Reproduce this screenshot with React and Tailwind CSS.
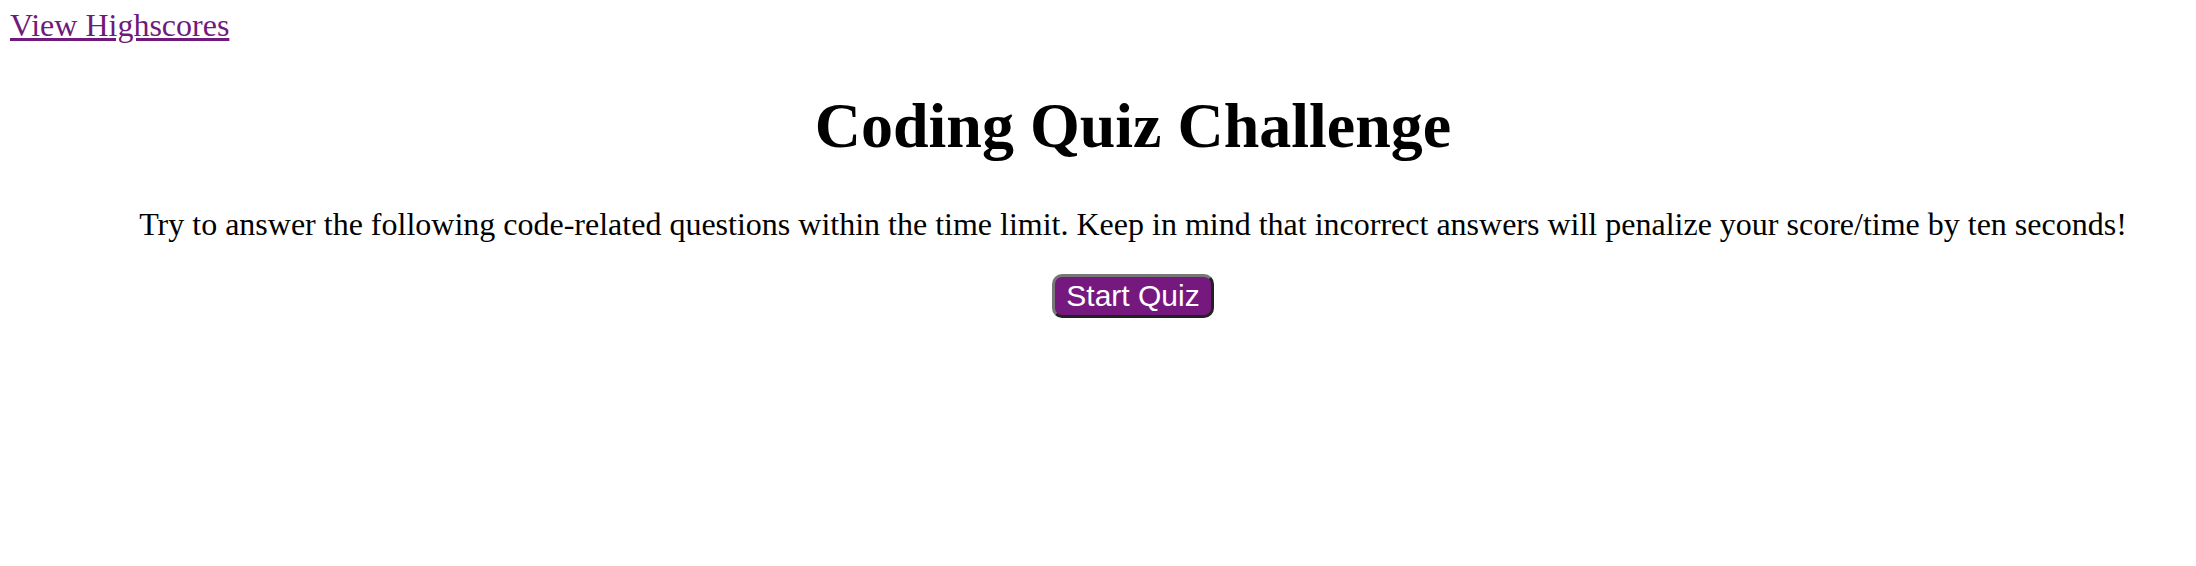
export default function App() {
    return (
        <div className="min-h-[566px] bg-white text-black">
            <header className="pt-[8px] pl-[10px] font-['Liberation_Serif',serif] text-[32px] leading-[35px]">
                <a href="#" className="text-[#701a7b] underline">View Highscores</a>
            </header>
            <main className="pl-[70px] text-center font-['Liberation_Serif',serif]">
                <h1 className="mt-[47px] text-[64px] font-bold leading-[71px]">Coding Quiz Challenge</h1>
                <p className="mt-[46px] text-[32px] leading-[35px]">
                    Try to answer the following code-related questions within the time limit. Keep in mind that incorrect answers will penalize your score/time by ten seconds!
                </p>
                <button className="mt-[32px] rounded-[10px] border-[3px] border-t-[#777777] border-l-[#777777] border-b-[#222222] border-r-[#222222] bg-[#76197f] px-[11px] py-[2px] font-['Liberation_Sans',Arial,sans-serif] text-[30px] leading-[34px] text-white">
                    Start Quiz
                </button>
            </main>
        </div>
    );
}
